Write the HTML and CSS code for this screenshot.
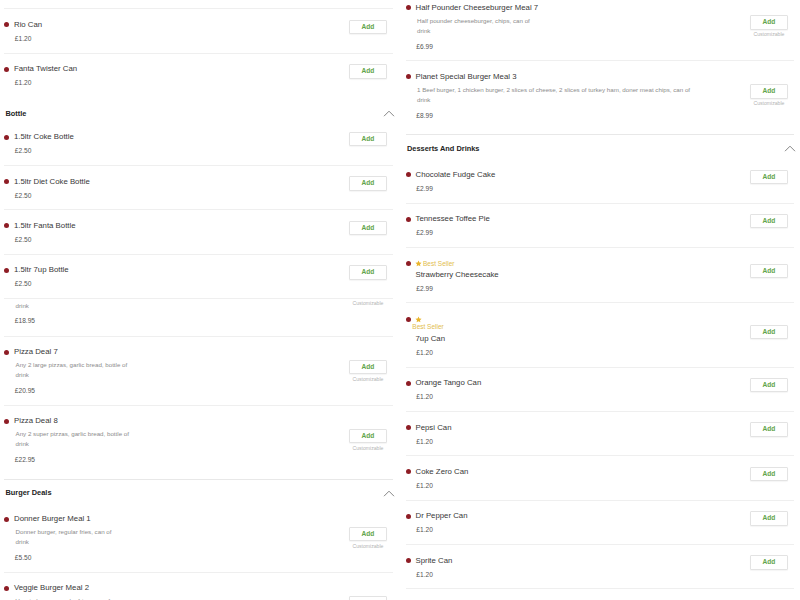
FILE: index.html
```html
<!DOCTYPE html>
<html lang="en">
<head>
<meta charset="utf-8">
<title>Menu</title>
<link rel="stylesheet" href="styles.css">
</head>
<body>
<div class="page">
  <div class="col col-left">
    <div class="stub"></div>

    <div class="item">
      <div class="info">
        <div class="title-row"><span class="dot"></span><span class="name">Rio Can</span></div>
        <div class="price">£1.20</div>
      </div>
      <div class="action"><button class="add">Add</button><span class="custom"></span></div>
    </div>
    <div class="item last">
      <div class="info">
        <div class="title-row"><span class="dot"></span><span class="name">Fanta Twister Can</span></div>
        <div class="price">£1.20</div>
      </div>
      <div class="action"><button class="add">Add</button><span class="custom"></span></div>
    </div>

    <div class="sub-head">
      <span class="section-title">Bottle</span>
      <svg class="chev" width="12" height="7" viewBox="0 0 12 7"><path d="M1 6.2 L6 1.2 L11 6.2" fill="none" stroke="#777" stroke-width="0.9"/></svg>
    </div>

    <div class="item">
      <div class="info">
        <div class="title-row"><span class="dot"></span><span class="name">1.5ltr Coke Bottle</span></div>
        <div class="price">£2.50</div>
      </div>
      <div class="action"><button class="add">Add</button><span class="custom"></span></div>
    </div>
    <div class="item">
      <div class="info">
        <div class="title-row"><span class="dot"></span><span class="name">1.5ltr Diet Coke Bottle</span></div>
        <div class="price">£2.50</div>
      </div>
      <div class="action"><button class="add">Add</button><span class="custom"></span></div>
    </div>
    <div class="item">
      <div class="info">
        <div class="title-row"><span class="dot"></span><span class="name">1.5ltr Fanta Bottle</span></div>
        <div class="price">£2.50</div>
      </div>
      <div class="action"><button class="add">Add</button><span class="custom"></span></div>
    </div>
    <div class="item">
      <div class="info">
        <div class="title-row"><span class="dot"></span><span class="name">1.5ltr 7up Bottle</span></div>
        <div class="price">£2.50</div>
      </div>
      <div class="action"><button class="add">Add</button><span class="custom"></span></div>
    </div>

    <div class="item frag">
      <div class="info">
        <div class="desc">drink</div>
        <div class="price">£18.95</div>
      </div>
      <div class="action"><span class="custom">Customizable</span></div>
    </div>

    <div class="item long">
      <div class="info">
        <div class="title-row"><span class="dot"></span><span class="name">Pizza Deal 7</span></div>
        <div class="desc">Any 2 large pizzas, garlic bread, bottle of<br>drink</div>
        <div class="price">£20.95</div>
      </div>
      <div class="action"><button class="add">Add</button><span class="custom">Customizable</span></div>
    </div>
    <div class="item long last">
      <div class="info">
        <div class="title-row"><span class="dot"></span><span class="name">Pizza Deal 8</span></div>
        <div class="desc">Any 2 super pizzas, garlic bread, bottle of<br>drink</div>
        <div class="price">£22.95</div>
      </div>
      <div class="action"><button class="add">Add</button><span class="custom">Customizable</span></div>
    </div>

    <div class="section-head">
      <span class="section-title">Burger Deals</span>
      <svg class="chev" width="12" height="7" viewBox="0 0 12 7"><path d="M1 6.2 L6 1.2 L11 6.2" fill="none" stroke="#777" stroke-width="0.9"/></svg>
    </div>

    <div class="item long">
      <div class="info">
        <div class="title-row"><span class="dot"></span><span class="name">Donner Burger Meal 1</span></div>
        <div class="desc">Donner burger, regular fries, can of<br>drink</div>
        <div class="price">£5.50</div>
      </div>
      <div class="action"><button class="add">Add</button><span class="custom">Customizable</span></div>
    </div>
    <div class="item long">
      <div class="info">
        <div class="title-row"><span class="dot"></span><span class="name">Veggie Burger Meal 2</span></div>
        <div class="desc">Veggie burger, regular fries, can of<br>drink</div>
        <div class="price">£5.50</div>
      </div>
      <div class="action"><button class="add">Add</button><span class="custom">Customizable</span></div>
    </div>
  </div>

  <div class="col col-right">
    <div class="item long">
      <div class="info">
        <div class="title-row"><span class="dot"></span><span class="name">Half Pounder Cheeseburger Meal 7</span></div>
        <div class="desc">Half pounder cheeseburger, chips, can of<br>drink</div>
        <div class="price">£6.99</div>
      </div>
      <div class="action"><button class="add">Add</button><span class="custom">Customizable</span></div>
    </div>
    <div class="item long last">
      <div class="info">
        <div class="title-row"><span class="dot"></span><span class="name">Planet Special Burger Meal 3</span></div>
        <div class="desc">1 Beef burger, 1 chicken burger, 2 slices of cheese, 2 slices of turkey ham, doner meat chips, can of<br>drink</div>
        <div class="price">£8.99</div>
      </div>
      <div class="action"><button class="add">Add</button><span class="custom">Customizable</span></div>
    </div>

    <div class="section-head">
      <span class="section-title">Desserts And Drinks</span>
      <svg class="chev" width="12" height="7" viewBox="0 0 12 7"><path d="M1 6.2 L6 1.2 L11 6.2" fill="none" stroke="#777" stroke-width="0.9"/></svg>
    </div>

    <div class="item">
      <div class="info">
        <div class="title-row"><span class="dot"></span><span class="name">Chocolate Fudge Cake</span></div>
        <div class="price">£2.99</div>
      </div>
      <div class="action"><button class="add">Add</button><span class="custom"></span></div>
    </div>
    <div class="item">
      <div class="info">
        <div class="title-row"><span class="dot"></span><span class="name">Tennessee Toffee Pie</span></div>
        <div class="price">£2.99</div>
      </div>
      <div class="action"><button class="add">Add</button><span class="custom"></span></div>
    </div>
    <div class="item">
      <div class="info">
        <div class="badge-row"><span class="dot"></span><svg class="star" width="7" height="7" viewBox="0 0 24 24"><path d="M12 1.5l3.1 6.9 7.4.8-5.5 5 1.6 7.3L12 17.8l-6.6 3.7L7 14.2l-5.5-5 7.4-.8z" fill="#e9b52c"/></svg><span class="bs-text">Best Seller</span></div>
        <div class="name solo">Strawberry Cheesecake</div>
        <div class="price">£2.99</div>
      </div>
      <div class="action"><button class="add">Add</button><span class="custom"></span></div>
    </div>
    <div class="item wrapped">
      <div class="info">
        <div class="badge-row tight"><span class="dot"></span><svg class="star" width="7" height="7" viewBox="0 0 24 24"><path d="M12 1.5l3.1 6.9 7.4.8-5.5 5 1.6 7.3L12 17.8l-6.6 3.7L7 14.2l-5.5-5 7.4-.8z" fill="#e9b52c"/></svg></div>
        <div class="bs-text wrap-text">Best Seller</div>
        <div class="name solo">7up Can</div>
        <div class="price">£1.20</div>
      </div>
      <div class="action"><button class="add">Add</button><span class="custom"></span></div>
    </div>
    <div class="item">
      <div class="info">
        <div class="title-row"><span class="dot"></span><span class="name">Orange Tango Can</span></div>
        <div class="price">£1.20</div>
      </div>
      <div class="action"><button class="add">Add</button><span class="custom"></span></div>
    </div>
    <div class="item">
      <div class="info">
        <div class="title-row"><span class="dot"></span><span class="name">Pepsi Can</span></div>
        <div class="price">£1.20</div>
      </div>
      <div class="action"><button class="add">Add</button><span class="custom"></span></div>
    </div>
    <div class="item">
      <div class="info">
        <div class="title-row"><span class="dot"></span><span class="name">Coke Zero Can</span></div>
        <div class="price">£1.20</div>
      </div>
      <div class="action"><button class="add">Add</button><span class="custom"></span></div>
    </div>
    <div class="item">
      <div class="info">
        <div class="title-row"><span class="dot"></span><span class="name">Dr Pepper Can</span></div>
        <div class="price">£1.20</div>
      </div>
      <div class="action"><button class="add">Add</button><span class="custom"></span></div>
    </div>
    <div class="item">
      <div class="info">
        <div class="title-row"><span class="dot"></span><span class="name">Sprite Can</span></div>
        <div class="price">£1.20</div>
      </div>
      <div class="action"><button class="add">Add</button><span class="custom"></span></div>
    </div>
    <div class="item">
      <div class="info">
        <div class="title-row"><span class="dot"></span><span class="name">Fanta Can</span></div>
        <div class="price">£1.20</div>
      </div>
      <div class="action"><button class="add">Add</button><span class="custom"></span></div>
    </div>
  </div>
</div>
</body>
</html>
```

FILE: styles.css
```css
html, body {
  margin: 0;
  padding: 0;
  background: #fff;
}

body {
  height: 600px;
  overflow: hidden;
  font-family: "Liberation Sans", Arial, sans-serif;
  color: #333;
}

.page {
  display: grid;
  grid-template-columns: 397px 403px;
  align-items: start;
}

.col-left {
  padding: 0 4px 0 4px;
}

.col-right {
  padding: 0 6px 0 8.5px;
  margin-top: -7.8px;
}

.stub {
  height: 8.3px;
  border-bottom: 1px solid #efefef;
}

.item {
  display: flex;
  align-items: center;
  justify-content: space-between;
  padding: 9.6px 0 7.8px;
  border-bottom: 1px solid #efefef;
}

.item.long {
  padding: 9.6px 0 7.4px;
}

.item.last {
  border-bottom: none;
}

.info {
  display: flex;
  flex-direction: column;
}

.title-row,
.badge-row {
  display: flex;
  align-items: center;
  height: 12px;
}

.badge-row {
  height: 11px;
}

.badge-row.tight {
  height: 8px;
}

.dot {
  flex: none;
  width: 5px;
  height: 5px;
  border-radius: 50%;
  background: #8e1d25;
  margin-right: 5px;
}

.name {
  font-size: 7.8px;
  line-height: 12px;
  color: #383838;
  white-space: nowrap;
}

.name.solo {
  margin-left: 10px;
}

.item.wrapped {
  padding-top: 12px;
  padding-bottom: 7.6px;
}

.wrapped .name.solo {
  margin-top: 1.7px;
}

.wrapped .price {
  margin-top: 1.9px;
}

.star {
  flex: none;
  margin-left: -0.5px;
  margin-right: 1px;
}

.bs-text {
  font-size: 6.5px;
  line-height: 11px;
  color: #e2bc4e;
  white-space: nowrap;
}

.wrap-text {
  line-height: 8px;
  margin-left: 6.8px;
}

.desc {
  margin: 2px 0 0 11.5px;
  font-size: 6.2px;
  line-height: 10px;
  color: #8c8c8c;
  white-space: nowrap;
}

.price {
  margin: 2px 0 0 10.8px;
  font-size: 6.6px;
  line-height: 12px;
  color: #555;
  white-space: nowrap;
}

.desc + .price {
  margin-top: 5px;
}

.item.frag {
  align-items: flex-start;
  padding: 2.2px 0 9px;
}

.frag .desc {
  margin-top: 0;
}

.frag .desc + .price {
  margin-top: 3.5px;
}

.frag .action {
  margin-top: -1.5px;
}

.action {
  flex: none;
  display: flex;
  flex-direction: column;
  align-items: center;
  width: 38px;
  margin: 0 6px 1.4px 0;
}

.add {
  width: 38px;
  height: 14.5px;
  padding: 0;
  border: 1px solid #e3e3e3;
  border-radius: 1px;
  background: #fff;
  color: #62a44a;
  font-family: "Liberation Sans", Arial, sans-serif;
  font-weight: 700;
  font-size: 6.6px;
  line-height: 1;
  box-shadow: 0 1px 1px rgba(0, 0, 0, 0.04);
}

.custom {
  display: block;
  height: 7px;
  margin-top: 1.5px;
  font-size: 5.1px;
  line-height: 7px;
  color: #b3b3b3;
  white-space: nowrap;
}

.frag .custom {
  margin-top: 0;
}

.section-head,
.sub-head {
  display: flex;
  align-items: center;
  justify-content: space-between;
  padding: 8.5px 0 5.5px 1.5px;
}

.section-head {
  margin-top: 5px;
  border-top: 1px solid #e8e8e8;
}

.sub-head {
  padding-top: 11.5px;
  padding-bottom: 3px;
}

.section-title {
  font-size: 7.4px;
  line-height: 10px;
  font-weight: 700;
  color: #232323;
}

.chev {
  display: block;
  margin-right: -2px;
}
```
